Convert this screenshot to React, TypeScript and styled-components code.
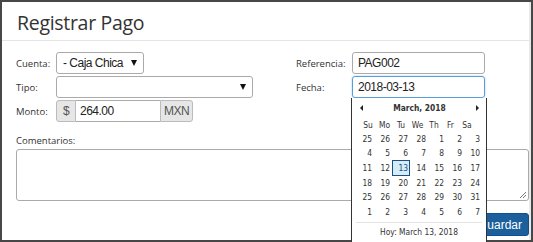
import styled, { createGlobalStyle } from "styled-components";

const GlobalStyle = createGlobalStyle`
  html, body {
    margin: 0;
    padding: 0;
    background: #474747;
  }
`;

const Frame = styled.div`
  width: 533px;
  height: 242px;
  box-sizing: border-box;
  padding: 2px;
  background: #474747;
  overflow: hidden;
`;

const Modal = styled.div`
  position: relative;
  height: 100%;
  background: #fff;
  border-right: 2px solid #e9e9e9;
  box-sizing: border-box;
  font-family: "Open Sans", "Liberation Sans", sans-serif;
  color: #333;
`;

const Header = styled.div`
  height: 39px;
  box-sizing: border-box;
  padding: 3px 0 0 15px;
  border-bottom: 1px solid #e5e5e5;
  display: flex;
  align-items: center;
`;

const Title = styled.h4`
  margin: 0;
  font-size: 19.5px;
  font-weight: 400;
  letter-spacing: -0.3px;
  color: #333;
`;

const Body = styled.div`
  padding: 11px 0 0 14px;
`;

const Columns = styled.div`
  display: grid;
  grid-template-columns: 280px 1fr;
`;

const Column = styled.div`
  display: flex;
  flex-direction: column;
  gap: 2px;
`;

const Row = styled.div`
  display: flex;
  align-items: center;
  height: 22px;
`;

const Label = styled.label<{ $w: number }>`
  width: ${(p) => p.$w}px;
  font-size: 9.5px;
  color: #333;
  flex-shrink: 0;
`;

const Field = styled.div`
  font-family: "Liberation Sans", Arial, sans-serif;
  font-size: 12px;
  letter-spacing: -0.5px;
  color: #222;
`;

const Select = styled(Field)<{ $w: number }>`
  width: ${(p) => p.$w}px;
  height: 22px;
  box-sizing: border-box;
  border: 1px solid #aaa;
  border-radius: 3px;
  display: flex;
  align-items: center;
  justify-content: space-between;
  padding: 0 6px 0 6px;
`;

const Arrow = styled.span`
  width: 0;
  height: 0;
  border-left: 3px solid transparent;
  border-right: 3px solid transparent;
  border-top: 6px solid #111;
`;

const Group = styled.div`
  display: flex;
  height: 22px;
`;

const Addon = styled(Field)<{ $w: number; $side: "l" | "r" }>`
  width: ${(p) => p.$w}px;
  box-sizing: border-box;
  background: #e6e6e6;
  border: 1px solid #bbb;
  border-radius: ${(p) => (p.$side === "l" ? "3px 0 0 3px" : "0 3px 3px 0")};
  display: flex;
  align-items: center;
  justify-content: center;
  color: #555;
`;

const GroupInput = styled(Field)`
  width: 84px;
  box-sizing: border-box;
  border-top: 1px solid #aaa;
  border-bottom: 1px solid #aaa;
  display: flex;
  align-items: center;
  padding-left: 4px;
`;

const Input = styled(Field)<{ $focus?: boolean }>`
  width: 133px;
  height: 22px;
  box-sizing: border-box;
  border: 1px solid ${(p) => (p.$focus ? "#5b9dd9" : "#aaa")};
  box-shadow: ${(p) => (p.$focus ? "0 0 2px rgba(91,157,217,0.6)" : "none")};
  border-radius: 3px;
  display: flex;
  align-items: center;
  padding-left: 5px;
`;

const CommentLabel = styled.div`
  margin-top: 12px;
  height: 14px;
  line-height: 14px;
  font-size: 9.5px;
  color: #333;
`;

const TextArea = styled.div`
  margin-top: 1px;
  height: 52px;
  box-sizing: border-box;
  border: 1px solid #aaa;
  border-radius: 3px;
  position: relative;
`;

const Grip = styled.svg`
  position: absolute;
  right: 1px;
  bottom: 1px;
`;

const Footer = styled.div`
  display: flex;
  justify-content: flex-end;
  margin-top: 12px;
`;

const Button = styled.button`
  height: 23px;
  padding: 0 6px 0 12px;
  border: 1px solid #12508a;
  border-radius: 3px;
  background: #1b5f9c;
  color: #fff;
  font-family: "Liberation Sans", Arial, sans-serif;
  font-size: 12px;
`;

const Picker = styled.div`
  position: absolute;
  left: 349px;
  top: 96px;
  width: 136px;
  height: 145px;
  box-sizing: border-box;
  background: #fff;
  border: 1px solid #333;
  border-top: none;
  font-family: "DejaVu Sans Condensed", "DejaVu Sans", Verdana, sans-serif;
  font-size: 8.4px;
  color: #333;
`;

const PickerHead = styled.div`
  display: flex;
  align-items: center;
  justify-content: space-between;
  height: 19.5px;
  padding: 0 7px 0 8px;
  font-weight: bold;
`;

const Tri = styled.span<{ $dir: "l" | "r" }>`
  width: 0;
  height: 0;
  border-top: 3px solid transparent;
  border-bottom: 3px solid transparent;
  ${(p) =>
    p.$dir === "l"
      ? "border-right: 3px solid #222;"
      : "border-left: 3px solid #222;"}
`;

const DayNames = styled.div`
  display: grid;
  grid-template-columns: repeat(7, 16.5px);
  height: 14px;
  align-items: center;
  justify-items: center;
  padding-left: 7.75px;
`;

const Grid = styled.div`
  display: grid;
  grid-template-columns: repeat(7, 18px);
  grid-auto-rows: 14.6px;
  padding-left: 4px;
`;

const Cell = styled.div<{ $sel?: boolean }>`
  display: flex;
  align-items: center;
  justify-content: flex-end;
  padding-right: 2px;
  box-sizing: border-box;
  ${(p) =>
    p.$sel &&
    "background: #d6ebf8; border: 1px solid #1c4f7f; padding-right: 1px; color: #1c4f7f; height: 16px; margin-top: -0.7px;"}
`;

const Today = styled.div`
  margin: 3px 4px 0;
  border-top: 1px solid #e3e3e3;
  padding-top: 4px;
  text-align: center;
`;

const days = ["Su", "Mo", "Tu", "We", "Th", "Fr", "Sa"];
const dates = [
  25, 26, 27, 28, 1, 2, 3, 4, 5, 6, 7, 8, 9, 10, 11, 12, 13, 14, 15, 16, 17, 18,
  19, 20, 21, 22, 23, 24, 25, 26, 27, 28, 29, 30, 31, 1, 2, 3, 4, 5, 6, 7,
];

export default function App() {
  return (
    <>
      <GlobalStyle />
      <Frame>
        <Modal>
          <Header>
            <Title>Registrar Pago</Title>
          </Header>
          <Body>
            <Columns>
              <Column>
                <Row>
                  <Label $w={40}>Cuenta:</Label>
                  <Select $w={88}>
                    - Caja Chica <Arrow />
                  </Select>
                </Row>
                <Row>
                  <Label $w={40}>Tipo:</Label>
                  <Select $w={197}>
                    <span />
                    <Arrow />
                  </Select>
                </Row>
                <Row>
                  <Label $w={40}>Monto:</Label>
                  <Group>
                    <Addon $w={20} $side="l">
                      $
                    </Addon>
                    <GroupInput>264.00</GroupInput>
                    <Addon $w={33} $side="r">
                      MXN
                    </Addon>
                  </Group>
                </Row>
              </Column>
              <Column>
                <Row>
                  <Label $w={56}>Referencia:</Label>
                  <Input>PAG002</Input>
                </Row>
                <Row>
                  <Label $w={56}>Fecha:</Label>
                  <Input $focus>2018-03-13</Input>
                </Row>
              </Column>
            </Columns>
            <CommentLabel>Comentarios:</CommentLabel>
            <TextArea>
              <Grip width="9" height="9" viewBox="0 0 9 9">
                <path d="M8 2 L2 8 M8 5 L5 8" stroke="#777" strokeWidth="1" />
              </Grip>
            </TextArea>
            <Footer>
              <Button>Guardar</Button>
            </Footer>
          </Body>
          <Picker>
            <PickerHead>
              <Tri $dir="l" />
              <span>March, 2018</span>
              <Tri $dir="r" />
            </PickerHead>
            <DayNames>
              {days.map((d) => (
                <span key={d}>{d}</span>
              ))}
            </DayNames>
            <Grid>
              {dates.map((d, i) => (
                <Cell key={i} $sel={i === 16}>
                  {d}
                </Cell>
              ))}
            </Grid>
            <Today>Hoy: March 13, 2018</Today>
          </Picker>
        </Modal>
      </Frame>
    </>
  );
}
